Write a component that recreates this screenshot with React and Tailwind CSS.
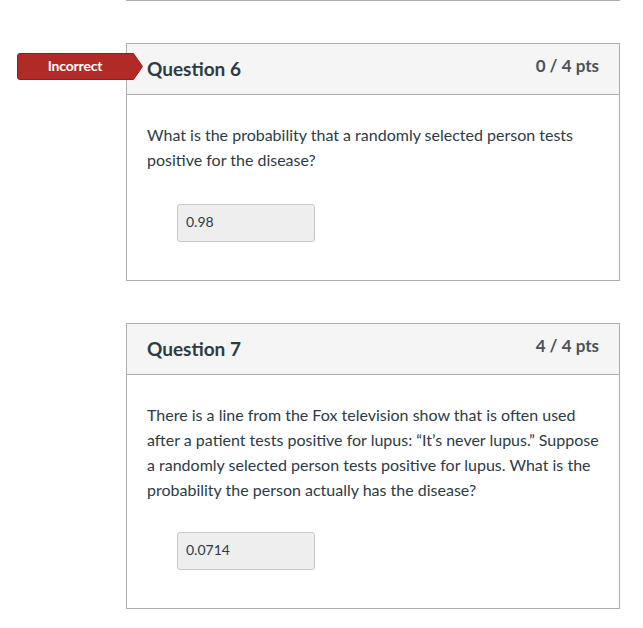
import React from "react";

const font = { fontFamily: "Lato, 'Noto Sans', sans-serif" };

function Badge() {
  return (
    <div className="absolute left-[-110px] top-[9px] w-[126px] h-[27px]">
      <svg width="126" height="27" viewBox="0 0 126 27" className="absolute inset-0">
        <path
          d="M3 0.5 H116.5 L125.5 13.5 L116.5 26.5 H3 Q0.5 26.5 0.5 24 V3 Q0.5 0.5 3 0.5 Z"
          fill="#b12a27"
          stroke="#8e1f1c"
          strokeWidth="1"
        />
      </svg>
      <div className="relative w-[116px] h-[27px] pb-[3px] flex items-center justify-center text-white text-[14px] font-bold tracking-[-0.2px]">
        Incorrect
      </div>
    </div>
  );
}

function Card({ title, pts, incorrect, children, bodyClass }) {
  return (
    <div className="relative w-[494px] border border-[#aeaeae] bg-white">
      {incorrect && <Badge />}
      <div className="h-[51px] bg-[#f5f5f5] border-b border-[#aeaeae] flex justify-between pl-[20px] pr-[20px]">
        <div className="pt-[12px] text-[19px] font-bold text-[#2d3b45] leading-[25px]">{title}</div>
        <div className="pt-[11px] text-[17px] font-bold text-[#4b5258] leading-[22px]">{pts}</div>
      </div>
      <div className={bodyClass}>{children}</div>
    </div>
  );
}

function Answer({ value, className }) {
  return (
    <div className={"ml-[30px] w-[138px] h-[38px] bg-[#eeeeee] border border-[#c8c8c8] rounded-[3px] flex items-center pl-[8px] pb-[3px] text-[14px] text-[#2d3b45] " + className}>
      {value}
    </div>
  );
}

export default function App() {
  return (
    <div className="w-[643px] h-[628px] bg-white overflow-hidden" style={font}>
      <div className="ml-[126px]">
        <div className="w-[494px] h-px bg-[#aeaeae]" />
        <div className="mt-[42px]">
          <Card title="Question 6" pts="0 / 4 pts" incorrect bodyClass="pt-[27px] pb-[38px] px-[20px]">
            <p className="text-[16px] leading-[25px] text-[#2d3b45]">
              What is the probability that a randomly selected person tests positive for the disease?
            </p>
            <Answer value="0.98" className="mt-[32px]" />
          </Card>
        </div>
        <div className="mt-[42px]">
          <Card title="Question 7" pts="4 / 4 pts" bodyClass="pt-[27px] pb-[38px] px-[20px]">
            <p className="text-[16px] leading-[25px] text-[#2d3b45]">
              There is a line from the Fox television show that is often used after a patient tests positive for lupus: “It’s never lupus.” Suppose a randomly selected person tests positive for lupus. What is the probability the person actually has the disease?
            </p>
            <Answer value="0.0714" className="mt-[30px]" />
          </Card>
        </div>
      </div>
    </div>
  );
}
